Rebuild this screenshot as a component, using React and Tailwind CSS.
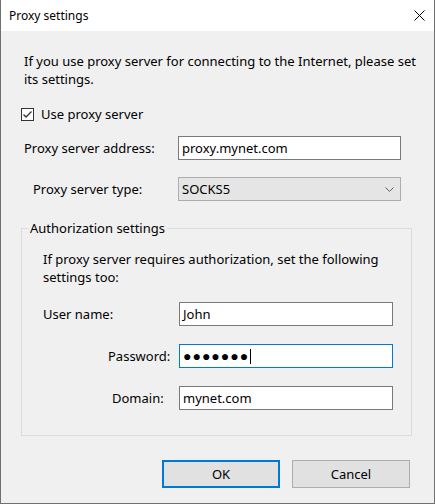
import { useState } from "react";

// ── Small drawings ────────────────────────────────────────────────────────────
const CloseIcon = () => (
  <svg width="11" height="11" viewBox="0 0 11 11">
    <path d="M0.5 0.5 L10.5 10.5 M10.5 0.5 L0.5 10.5" stroke="#000" strokeWidth="1" fill="none" />
  </svg>
);

const Chevron = () => (
  <svg width="9" height="5" viewBox="0 0 9 5">
    <path d="M0.5 0.5 L4.5 4.5 L8.5 0.5" stroke="#606060" strokeWidth="1" fill="none" />
  </svg>
);

const CheckBox = ({ checked, onChange }) => (
  <button onClick={onChange}
    className="w-[13px] h-[13px] border border-[#333] bg-white flex items-center justify-center shrink-0">
    {checked && (
      <svg width="11" height="11" viewBox="0 0 11 11">
        <path d="M1.5 5.5 L4 8 L9.5 2.5" stroke="#333" strokeWidth="1.3" fill="none" />
      </svg>
    )}
  </button>
);

const Field = ({ value, focused, password }) => (
  <div className={`h-[24px] bg-white border flex items-center pl-[3px] ${focused ? "border-[#0078d7]" : "border-[#7a7a7a]"}`}>
    {password ? (
      <span className="flex items-center">
        <span className="tracking-[1px] text-[14px]">{"●".repeat(value.length)}</span>
        <span className="w-px h-[15px] bg-black ml-[1px]" />
      </span>
    ) : (
      <span>{value}</span>
    )}
  </div>
);

// ── Dialog ────────────────────────────────────────────────────────────────────
export default function App() {
  const [useProxy, setUseProxy] = useState(true);

  return (
    <div className="w-[435px] h-[504px] flex flex-col border-x border-b border-[#707070] bg-[#f0f0f0] text-black text-[13px] leading-[18px] overflow-hidden"
      style={{ fontFamily: '"Noto Sans", "Liberation Sans", sans-serif' }}>

      {/* Title bar */}
      <div className="h-[31px] bg-white flex items-center justify-between pl-[8px] pr-[9px] shrink-0">
        <span className="text-[12px]">Proxy settings</span>
        <CloseIcon />
      </div>

      <div className="flex-1 flex flex-col">
        <p className="mt-[21px] ml-[23px] mr-[12px]">
          If you use proxy server for connecting to the Internet, please set its settings.
        </p>

        <label className="mt-[17px] ml-[20px] flex items-center gap-[7px]">
          <CheckBox checked={useProxy} onChange={() => setUseProxy(!useProxy)} />
          <span>Use proxy server</span>
        </label>

        <div className="mt-[13px] flex items-center">
          <span className="w-[177px] pl-[23px]">Proxy server address:</span>
          <div className="w-[223px]"><Field value="proxy.mynet.com" /></div>
        </div>

        <div className="mt-[17px] flex items-center">
          <span className="w-[177px] pl-[32px]">Proxy server type:</span>
          <div className="w-[223px] h-[24px] bg-[#e5e5e5] border border-[#adadad] flex items-center justify-between pl-[3px] pr-[6px]">
            <span>SOCKS5</span>
            <Chevron />
          </div>
        </div>

        {/* Authorization group */}
        <fieldset className="mt-[18px] ml-[20px] w-[391px] h-[217px] border border-[#dcdcdc] px-0 pb-0">
          <legend className="ml-[6px] px-[2px]">Authorization settings</legend>

          <p className="mt-[13px] ml-[21px] mr-[10px]">
            If proxy server requires authorization, set the following settings too:
          </p>

          <div className="mt-[16px] flex items-center">
            <span className="w-[157px] pl-[21px]">User name:</span>
            <div className="w-[214px]"><Field value="John" /></div>
          </div>

          <div className="mt-[18px] flex items-center">
            <span className="w-[157px] pl-[86px]">Password:</span>
            <div className="w-[214px]"><Field value="1234567" focused password /></div>
          </div>

          <div className="mt-[18px] flex items-center">
            <span className="w-[157px] pl-[90px]">Domain:</span>
            <div className="w-[214px]"><Field value="mynet.com" /></div>
          </div>
        </fieldset>

        {/* Buttons */}
        <div className="mt-[24px] flex justify-end gap-[12px] pr-[24px]">
          <button className="w-[118px] h-[28px] bg-[#e1e1e1] border-2 border-[#0078d7]">OK</button>
          <button className="w-[118px] h-[28px] bg-[#e1e1e1] border border-[#adadad]">Cancel</button>
        </div>
      </div>
    </div>
  );
}
